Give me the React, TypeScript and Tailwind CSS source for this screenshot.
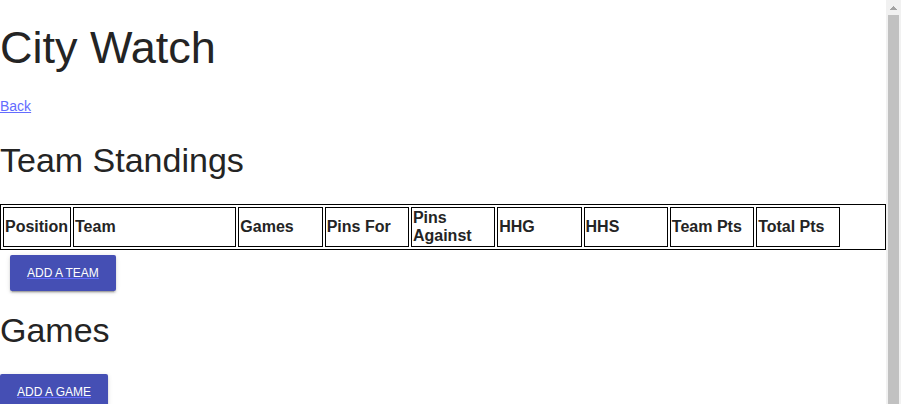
import type { ReactNode } from "react";

const columns = [
  { label: "Position", width: "w-[68px]" },
  { label: "Team", width: "w-[18.95%]" },
  { label: "Games", width: "w-[9.78%]" },
  { label: "Pins For", width: "w-[9.78%]" },
  { label: "Pins Against", width: "w-[9.78%]" },
  { label: "HHG", width: "w-[9.78%]" },
  { label: "HHS", width: "w-[9.78%]" },
  { label: "Team Pts", width: "w-[9.78%]" },
  { label: "Total Pts", width: "w-[9.78%]" },
];

function SectionTitle({ children }: { children: ReactNode }) {
  return <h2 className="mb-6 text-[34px] leading-10">{children}</h2>;
}

function ActionButton({ children }: { children: ReactNode }) {
  return (
    <button
      type="button"
      className="block h-9 rounded-xs bg-[#454fb4] px-[17px] text-xs text-white uppercase underline decoration-[#646cff] shadow-[0_3px_1px_-2px_rgba(0,0,0,0.2),0_2px_2px_0_rgba(0,0,0,0.14),0_1px_5px_0_rgba(0,0,0,0.12)]"
    >
      {children}
    </button>
  );
}

function StandingsTable() {
  return (
    <table className="w-full table-fixed border-separate border-spacing-[2px] border border-black text-left text-base leading-[18px]">
      <thead>
        <tr>
          {columns.map((column) => (
            <th
              key={column.label}
              scope="col"
              className={`border border-black p-px align-middle font-bold ${column.width}`}
            >
              {column.label}
            </th>
          ))}
          <td />
        </tr>
      </thead>
    </table>
  );
}

function ScrollRail() {
  return (
    <div aria-hidden="true" className="flex w-[15px] shrink-0 flex-col items-center bg-[#f1f1f1]">
      <svg className="h-[15px] w-[15px] shrink-0" viewBox="0 0 15 15" shapeRendering="crispEdges">
        <path d="M7 6h1v1h1v1h1v1h1v1H4V9h1V8h1V7h1z" fill="#a3a3a3" />
      </svg>
      <div className="w-[11px] grow bg-[#c1c1c1]" />
    </div>
  );
}

export default function App() {
  return (
    <div className="flex h-screen overflow-hidden bg-white font-['Liberation_Sans',Arial,sans-serif] text-[#242424]">
      <main className="min-w-0 grow overflow-hidden">
        <h1 className="my-6 text-[45px] leading-12">City Watch</h1>
        <p className="mb-6 text-sm leading-5">
          <a href="#back" className="text-[#646cff] underline">
            Back
          </a>
        </p>
        <section>
          <SectionTitle>Team Standings</SectionTitle>
          <StandingsTable />
          <div className="mt-[5px] mb-[19px] pl-[10px]">
            <ActionButton>Add a team</ActionButton>
          </div>
        </section>
        <section>
          <SectionTitle>Games</SectionTitle>
          <ActionButton>Add a game</ActionButton>
        </section>
      </main>
      <ScrollRail />
    </div>
  );
}
